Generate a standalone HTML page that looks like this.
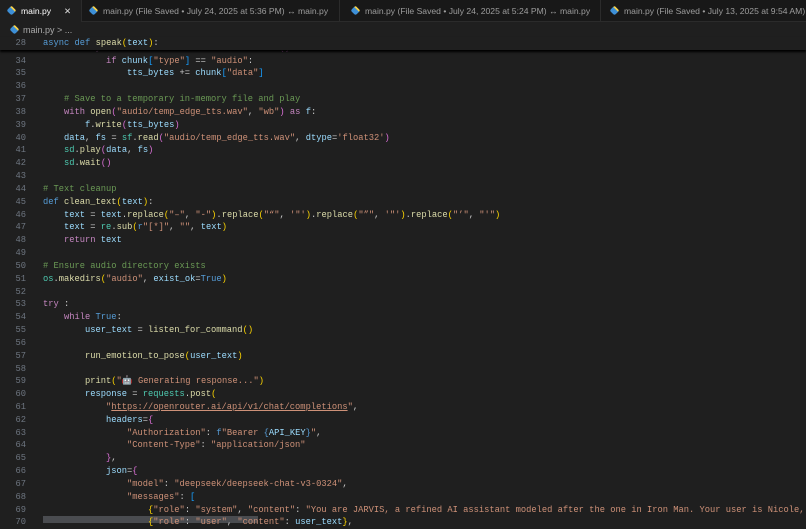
<!DOCTYPE html>
<html><head><meta charset="utf-8"><style>
*{margin:0;padding:0;box-sizing:border-box}
body{width:806px;height:523px;overflow:hidden;background:#1f1f1f;font-family:"Liberation Sans",sans-serif;position:relative}
.tabs{position:absolute;left:0;top:0;width:806px;height:22px;background:#181818;border-bottom:1px solid #2b2b2b}
.tab{position:absolute;top:0;height:22px;font-size:8.6px;color:#9d9d9d;line-height:22px;white-space:nowrap;border-right:1px solid #2b2b2b;padding-left:8px;overflow:hidden}
.tab.a{background:#1f1f1f;color:#fff}
.ic{display:inline-block;width:7px;height:7px;background:#3d8fd6;border-radius:2px;transform:rotate(45deg);margin-right:6px;vertical-align:-0px;border-top:2px solid #f4cf4a}
.bc{position:absolute;top:23px;left:11px;font-size:9px;color:#a9a9a9;line-height:14px}
.code{position:absolute;left:0;top:41.8px;width:806px;font-family:"Liberation Mono",monospace;font-size:8.75px}
.l{height:12.83px;line-height:12.83px;white-space:pre;position:relative;color:#cccccc}
.n{display:inline-block;width:26px;text-align:right;color:#6e7681;margin-right:17px}
.sticky{position:absolute;left:0;top:37px;width:806px;height:13px;background:#1f1f1f;box-shadow:0 2px 2px #000;z-index:2;font-family:"Liberation Mono",monospace;font-size:8.75px}
.k{color:#569cd6}.c{color:#c586c0}.f{color:#dcdcaa}.v{color:#9cdcfe}.s{color:#ce9178}.m{color:#6a9955}.y{color:#ffd700}.p{color:#da70d6}.b{color:#179fff}.t{color:#4ec9b0}
.u{text-decoration:underline}
.sel{position:absolute;left:43px;top:516px;width:215px;height:7px;background:#4a4c50}
</style></head><body>
<div class="tabs">
<div class="tab a" style="left:0;width:82px"><span class="ic"></span>main.py<span style="position:absolute;left:64px;color:#ddd">✕</span></div>
<div class="tab" style="left:82px;width:258px"><span class="ic"></span>main.py (File Saved • July 24, 2025 at 5:36 PM) ↔ main.py</div>
<div class="tab" style="left:340px;width:261px;padding-left:12px"><span class="ic"></span>main.py (File Saved • July 24, 2025 at 5:24 PM) ↔ main.py</div>
<div class="tab" style="left:601px;width:205px;padding-left:10px;border-right:none"><span class="ic"></span>main.py (File Saved • July 13, 2025 at 9:54 AM) ↔</div>
</div>
<div class="bc"><span class="ic" style="margin-right:5px"></span>main.py &gt; ...</div>
<div class="sticky"><div class="l" style="line-height:13px"><span class="n">28</span><span class="k">async</span> <span class="k">def</span> <span class="f">speak</span><span class="y">(</span><span class="v">text</span><span class="y">)</span>:</div></div>
<div class="sel"></div>
<div class="code">
<div class="l"><span class="n">33</span>        <span class="c">async</span> <span class="c">for</span> <span class="v">chunk</span> <span class="c">in</span> <span class="v">communicate</span>.<span class="f">stream</span><span class="p">()</span>:</div>
<div class="l"><span class="n">34</span>            <span class="c">if</span> <span class="v">chunk</span><span class="b">[</span><span class="s">"type"</span><span class="b">]</span> == <span class="s">"audio"</span>:</div>
<div class="l"><span class="n">35</span>                <span class="v">tts_bytes</span> += <span class="v">chunk</span><span class="b">[</span><span class="s">"data"</span><span class="b">]</span></div>
<div class="l"><span class="n">36</span></div>
<div class="l"><span class="n">37</span>    <span class="m"># Save to a temporary in-memory file and play</span></div>
<div class="l"><span class="n">38</span>    <span class="c">with</span> <span class="f">open</span><span class="p">(</span><span class="s">"audio/temp_edge_tts.wav"</span>, <span class="s">"wb"</span><span class="p">)</span> <span class="c">as</span> <span class="v">f</span>:</div>
<div class="l"><span class="n">39</span>        <span class="v">f</span>.<span class="f">write</span><span class="p">(</span><span class="v">tts_bytes</span><span class="p">)</span></div>
<div class="l"><span class="n">40</span>    <span class="v">data</span>, <span class="v">fs</span> = <span class="t">sf</span>.<span class="f">read</span><span class="p">(</span><span class="s">"audio/temp_edge_tts.wav"</span>, <span class="v">dtype</span>=<span class="s">'float32'</span><span class="p">)</span></div>
<div class="l"><span class="n">41</span>    <span class="t">sd</span>.<span class="f">play</span><span class="p">(</span><span class="v">data</span>, <span class="v">fs</span><span class="p">)</span></div>
<div class="l"><span class="n">42</span>    <span class="t">sd</span>.<span class="f">wait</span><span class="p">()</span></div>
<div class="l"><span class="n">43</span></div>
<div class="l"><span class="n">44</span><span class="m"># Text cleanup</span></div>
<div class="l"><span class="n">45</span><span class="k">def</span> <span class="f">clean_text</span><span class="y">(</span><span class="v">text</span><span class="y">)</span>:</div>
<div class="l"><span class="n">46</span>    <span class="v">text</span> = <span class="v">text</span>.<span class="f">replace</span><span class="y">(</span><span class="s">"–"</span>, <span class="s">"-"</span><span class="y">)</span>.<span class="f">replace</span><span class="y">(</span><span class="s">"“"</span>, <span class="s">'"'</span><span class="y">)</span>.<span class="f">replace</span><span class="y">(</span><span class="s">"”"</span>, <span class="s">'"'</span><span class="y">)</span>.<span class="f">replace</span><span class="y">(</span><span class="s">"’"</span>, <span class="s">"'"</span><span class="y">)</span></div>
<div class="l"><span class="n">47</span>    <span class="v">text</span> = <span class="t">re</span>.<span class="f">sub</span><span class="y">(</span><span class="k">r</span><span class="s">"[*]"</span>, <span class="s">""</span>, <span class="v">text</span><span class="y">)</span></div>
<div class="l"><span class="n">48</span>    <span class="c">return</span> <span class="v">text</span></div>
<div class="l"><span class="n">49</span></div>
<div class="l"><span class="n">50</span><span class="m"># Ensure audio directory exists</span></div>
<div class="l"><span class="n">51</span><span class="t">os</span>.<span class="f">makedirs</span><span class="y">(</span><span class="s">"audio"</span>, <span class="v">exist_ok</span>=<span class="k">True</span><span class="y">)</span></div>
<div class="l"><span class="n">52</span></div>
<div class="l"><span class="n">53</span><span class="c">try</span> :</div>
<div class="l"><span class="n">54</span>    <span class="c">while</span> <span class="k">True</span>:</div>
<div class="l"><span class="n">55</span>        <span class="v">user_text</span> = <span class="f">listen_for_command</span><span class="y">()</span></div>
<div class="l"><span class="n">56</span></div>
<div class="l"><span class="n">57</span>        <span class="f">run_emotion_to_pose</span><span class="y">(</span><span class="v">user_text</span><span class="y">)</span></div>
<div class="l"><span class="n">58</span></div>
<div class="l"><span class="n">59</span>        <span class="f">print</span><span class="y">(</span><span class="s">"🤖 Generating response..."</span><span class="y">)</span></div>
<div class="l"><span class="n">60</span>        <span class="v">response</span> = <span class="t">requests</span>.<span class="f">post</span><span class="y">(</span></div>
<div class="l"><span class="n">61</span>            <span class="s">"<span class="u">https://openrouter.ai/api/v1/chat/completions</span>"</span>,</div>
<div class="l"><span class="n">62</span>            <span class="v">headers</span>=<span class="p">{</span></div>
<div class="l"><span class="n">63</span>                <span class="s">"Authorization"</span>: <span class="k">f</span><span class="s">"Bearer </span><span class="k">{</span><span class="v">API_KEY</span><span class="k">}</span><span class="s">"</span>,</div>
<div class="l"><span class="n">64</span>                <span class="s">"Content-Type"</span>: <span class="s">"application/json"</span></div>
<div class="l"><span class="n">65</span>            <span class="p">}</span>,</div>
<div class="l"><span class="n">66</span>            <span class="v">json</span>=<span class="p">{</span></div>
<div class="l"><span class="n">67</span>                <span class="s">"model"</span>: <span class="s">"deepseek/deepseek-chat-v3-0324"</span>,</div>
<div class="l"><span class="n">68</span>                <span class="s">"messages"</span>: <span class="b">[</span></div>
<div class="l"><span class="n">69</span>                    <span class="y">{</span><span class="s">"role"</span>: <span class="s">"system"</span>, <span class="s">"content"</span>: <span class="s">"You are JARVIS, a refined AI assistant modeled after the one in Iron Man. Your user is Nicole, a</span></div>
<div class="l"><span class="n">70</span>                    <span class="y">{</span><span class="s">"role"</span>: <span class="s">"user"</span>, <span class="s">"content"</span>: <span class="v">user_text</span><span class="y">}</span>,</div>
</div>
</body></html>
